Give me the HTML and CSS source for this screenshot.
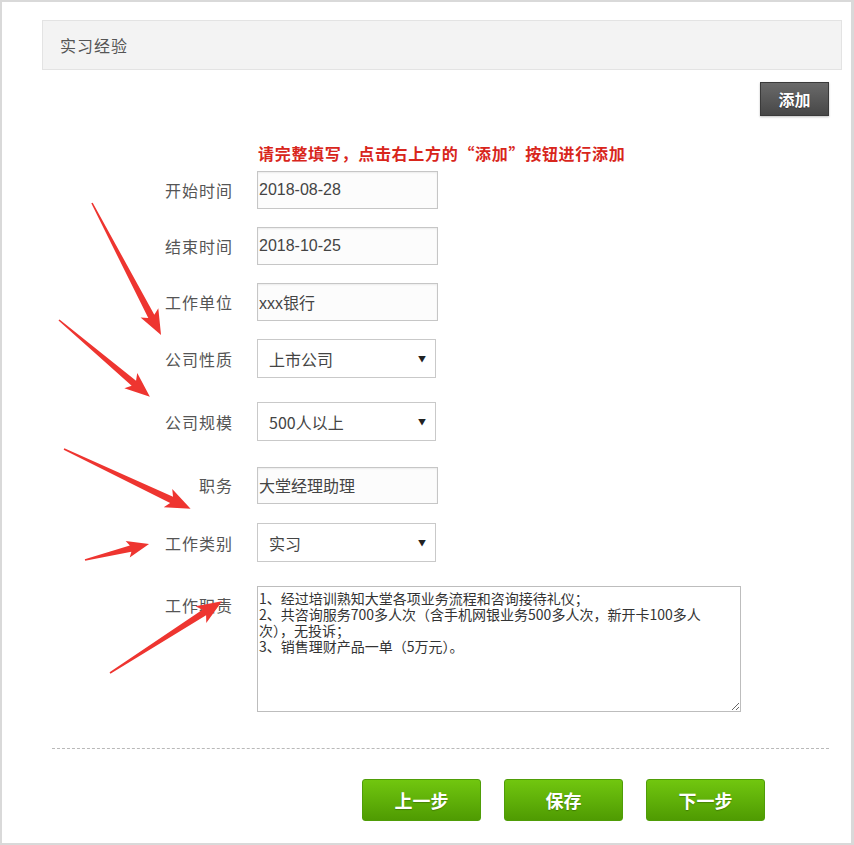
FILE: index.html
```html
<!DOCTYPE html>
<html lang="zh-CN">
<head>
<meta charset="utf-8">
<title>实习经验</title>
<link rel="stylesheet" href="styles.css">
</head>
<body>
<div class="frame">
  <div class="section-head">实习经验</div>
  <div class="toolbar"><button class="btn-add" type="button">添加</button></div>
  <div class="form">
    <p class="notice">请完整填写，点击右上方的“添加”按钮进行添加</p>
    <div class="row"><label class="lbl">开始时间</label><input class="field" type="text" value="2018-08-28"></div>
    <div class="row"><label class="lbl">结束时间</label><input class="field" type="text" value="2018-10-25"></div>
    <div class="row"><label class="lbl">工作单位</label><input class="field" type="text" value="xxx银行"></div>
    <div class="row row--select"><label class="lbl">公司性质</label><span class="select-wrap"><select class="select"><option>上市公司</option></select></span></div>
    <div class="row row--select row--loose"><label class="lbl">公司规模</label><span class="select-wrap"><select class="select"><option>500人以上</option></select></span></div>
    <div class="row row--looser"><label class="lbl">职务</label><input class="field field--short" type="text" value="大堂经理助理"></div>
    <div class="row row--select row--mid"><label class="lbl">工作类别</label><span class="select-wrap"><select class="select"><option>实习</option></select></span></div>
    <div class="row row--top row--loose"><label class="lbl">工作职责</label><textarea class="area">1、经过培训熟知大堂各项业务流程和咨询接待礼仪；
2、共咨询服务700多人次（含手机网银业务500多人次，新开卡100多人次），无投诉；
3、销售理财产品一单（5万元）。</textarea></div>
  </div>
  <div class="divider"></div>
  <div class="actions">
    <button class="btn-green" type="button">上一步</button>
    <button class="btn-green" type="button">保存</button>
    <button class="btn-green" type="button">下一步</button>
  </div>
</div>
<svg class="arrows" width="854" height="845" viewBox="0 0 854 845" aria-hidden="true">
  <g fill="#ee3530">
    <polygon points="0,-0.8 128,-3.4 124,-10 149,0 124,10 128,3.4 0,0.8" transform="translate(92 203) rotate(62.4)"/>
    <polygon points="0,-0.8 98,-3.4 94,-10 119,0 94,10 98,3.4 0,0.8" transform="translate(59 320) rotate(40.2)"/>
    <polygon points="0,-0.8 119,-3.4 115,-10 140,0 115,10 119,3.4 0,0.8" transform="translate(64 449) rotate(25.3)"/>
    <polygon points="0,-0.8 47,-3.2 44,-8.5 66,0 44,8.5 47,3.2 0,0.8" transform="translate(85 560) rotate(-14)"/>
    <polygon points="0,-0.8 112,-3.4 108,-10 133,0 108,10 112,3.4 0,0.8" transform="translate(110 673) rotate(-32.7)"/>
  </g>
</svg>
</body>
</html>
```
FILE: styles.css
```css
html, body {
  margin: 0;
  padding: 0;
  background: #ffffff;
}
body {
  font-family: "Noto Sans CJK SC", "Noto Sans", sans-serif;
  color: #555;
}
.frame {
  width: 854px;
  height: 845px;
  box-sizing: border-box;
  border-style: solid;
  border-color: #d9d9d9;
  border-width: 2px 3px 2px 2px;
  background: #fff;
  overflow: hidden;
}
.section-head {
  margin: 18px 0 0 40px;
  width: 800px;
  height: 50px;
  box-sizing: border-box;
  background: #f3f3f3;
  border: 1px solid #e3e3e3;
  padding-left: 17px;
  font-size: 16px;
  letter-spacing: 1px;
  line-height: 48px;
  color: #555;
}
.toolbar {
  display: flex;
  justify-content: flex-end;
  margin-top: 12px;
  padding-right: 22px;
}
.btn-add {
  width: 69px;
  height: 34px;
  border: 1px solid #3a3a3a;
  background: linear-gradient(#6a6a6a, #474747);
  color: #fff;
  font-family: "Noto Sans CJK SC", sans-serif;
  font-size: 16px;
  font-weight: bold;
  line-height: 30px;
  padding: 0;
  box-shadow: 0 1px 2px rgba(0,0,0,.25);
  text-shadow: 0 1px 1px rgba(0,0,0,.4);
}
.form {
  display: flex;
  flex-direction: column;
}
.notice {
  margin: 27px 0 8px 256px;
  color: #d8261c;
  font-weight: bold;
  font-size: 16px;
  line-height: 20px;
  letter-spacing: 0.7px;
}
.row {
  display: flex;
  align-items: center;
  gap: 24px;
  padding-left: 111px;
}
.row + .row {
  margin-top: 18px;
}
.row + .row--mid {
  margin-top: 19px;
}
.row + .row--loose {
  margin-top: 24px;
}
.row + .row--looser {
  margin-top: 25px;
}
.row--top {
  align-items: flex-start;
}
.lbl {
  width: 120px;
  text-align: right;
  font-size: 16px;
  letter-spacing: 1px;
  line-height: 38px;
  color: #555;
}
.field {
  width: 181px;
  height: 38px;
  box-sizing: border-box;
  margin: 0;
  border: 1px solid #c6c6c6;
  box-shadow: inset 0 1px 2px rgba(0,0,0,.07);
  padding: 0 0 0 1px;
  background: #fcfcfc;
  font-family: "Liberation Sans", "Noto Sans CJK SC", sans-serif;
  font-size: 16px;
  color: #444;
}
.field--short {
  height: 37px;
}
.select-wrap {
  position: relative;
  display: inline-block;
}
.select-wrap::after {
  content: "▼";
  position: absolute;
  right: 10px;
  top: 50%;
  transform: translateY(-55%);
  font-size: 8px;
  color: #222;
  pointer-events: none;
}
.select {
  appearance: none;
  -webkit-appearance: none;
  width: 179px;
  height: 39px;
  box-sizing: border-box;
  margin: 0;
  border: 1px solid #c9c9c9;
  background: #fff;
  padding: 0 0 0 11px;
  font-family: "Noto Sans CJK SC", sans-serif;
  font-size: 16px;
  color: #444;
  border-radius: 0;
}
.area {
  display: block;
  width: 484px;
  height: 126px;
  box-sizing: border-box;
  margin: 0;
  border: 1px solid #bdbdbd;
  padding: 3px 30px 2px 1px;
  font-family: "Noto Sans CJK SC", sans-serif;
  font-size: 14px;
  line-height: 16px;
  color: #333;
  background: #fff;
}
.divider {
  margin: 36px 0 0 50px;
  width: 777px;
  border-top: 1px dashed #b9b9b9;
}
.actions {
  display: flex;
  gap: 23px;
  margin: 30px 0 0 360px;
}
.btn-green {
  width: 119px;
  height: 42px;
  border: 1px solid #4f9d08;
  border-radius: 3px;
  background: linear-gradient(#71c60f, #4f9b02);
  color: #fff;
  font-family: "Noto Sans CJK SC", sans-serif;
  font-size: 18px;
  font-weight: bold;
  padding: 0;
  text-shadow: 0 1px 1px rgba(0,0,0,.25);
}
.arrows {
  position: absolute;
  top: 0;
  left: 0;
  pointer-events: none;
}
```
